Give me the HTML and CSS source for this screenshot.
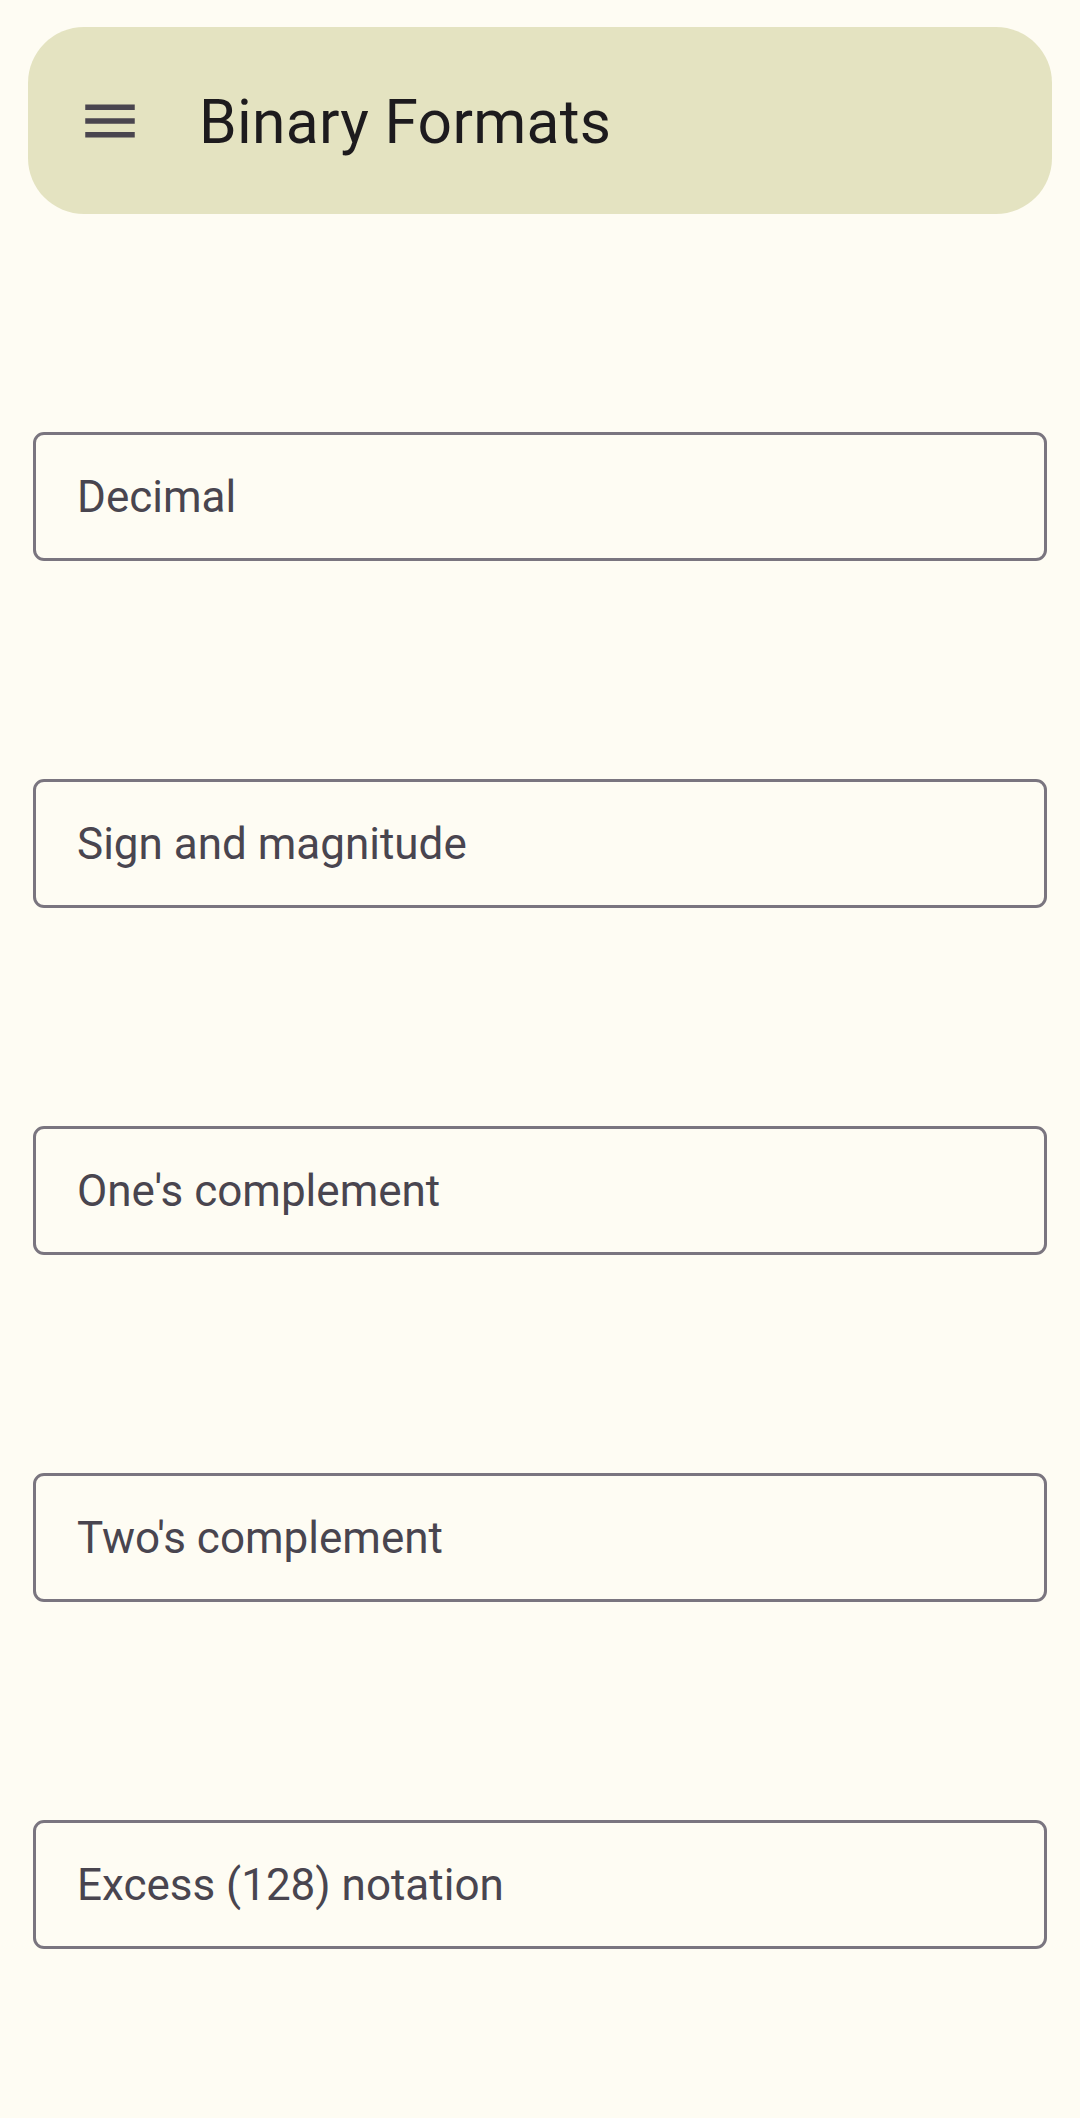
FILE: index.html
```html
<!DOCTYPE html>
<html lang="en">
<head>
<meta charset="utf-8">
<title>Binary Formats</title>
<link rel="stylesheet" href="styles.css">
</head>
<body>
<header class="appbar">
  <svg class="menu-icon" viewBox="0 0 24 24" width="66" height="66" aria-hidden="true">
    <path d="M3 18h18v-2H3v2zm0-5h18v-2H3v2zm0-7v2h18V6H3z" fill="#49454f"/>
  </svg>
  <h1 class="title">Binary Formats</h1>
</header>
<main class="fields">
  <div class="field"><span class="label">Decimal</span></div>
  <div class="field"><span class="label">Sign and magnitude</span></div>
  <div class="field"><span class="label">One's complement</span></div>
  <div class="field"><span class="label">Two's complement</span></div>
  <div class="field"><span class="label">Excess (128) notation</span></div>
</main>
</body>
</html>
```

FILE: styles.css
```css
html, body {
  margin: 0;
  padding: 0;
}

body {
  background: #fefcf3;
  font-family: Roboto, "Noto Sans", "Liberation Sans", sans-serif;
  width: 1080px;
  min-height: 2118px;
}

.appbar {
  margin: 27px 28px 0 28px;
  height: 187px;
  box-sizing: border-box;
  border-radius: 56px;
  background: #e4e3c1;
  display: flex;
  align-items: center;
  padding-left: 49px;
}

.menu-icon {
  display: block;
  flex: none;
}

.title {
  margin: 6px 0 0 56px;
  font-size: 60.5px;
  line-height: 1;
  font-weight: 400;
  letter-spacing: 0.3px;
  color: #1d1b1e;
}

.fields {
  display: flex;
  flex-direction: column;
  gap: 218px;
  padding: 218px 33px 0 33px;
}

.field {
  height: 129px;
  box-sizing: border-box;
  border: 3px solid #7a757f;
  border-radius: 11px;
  display: flex;
  align-items: center;
  padding-left: 41px;
}

.label {
  font-size: 44px;
  line-height: 1;
  color: #49454f;
}
```
